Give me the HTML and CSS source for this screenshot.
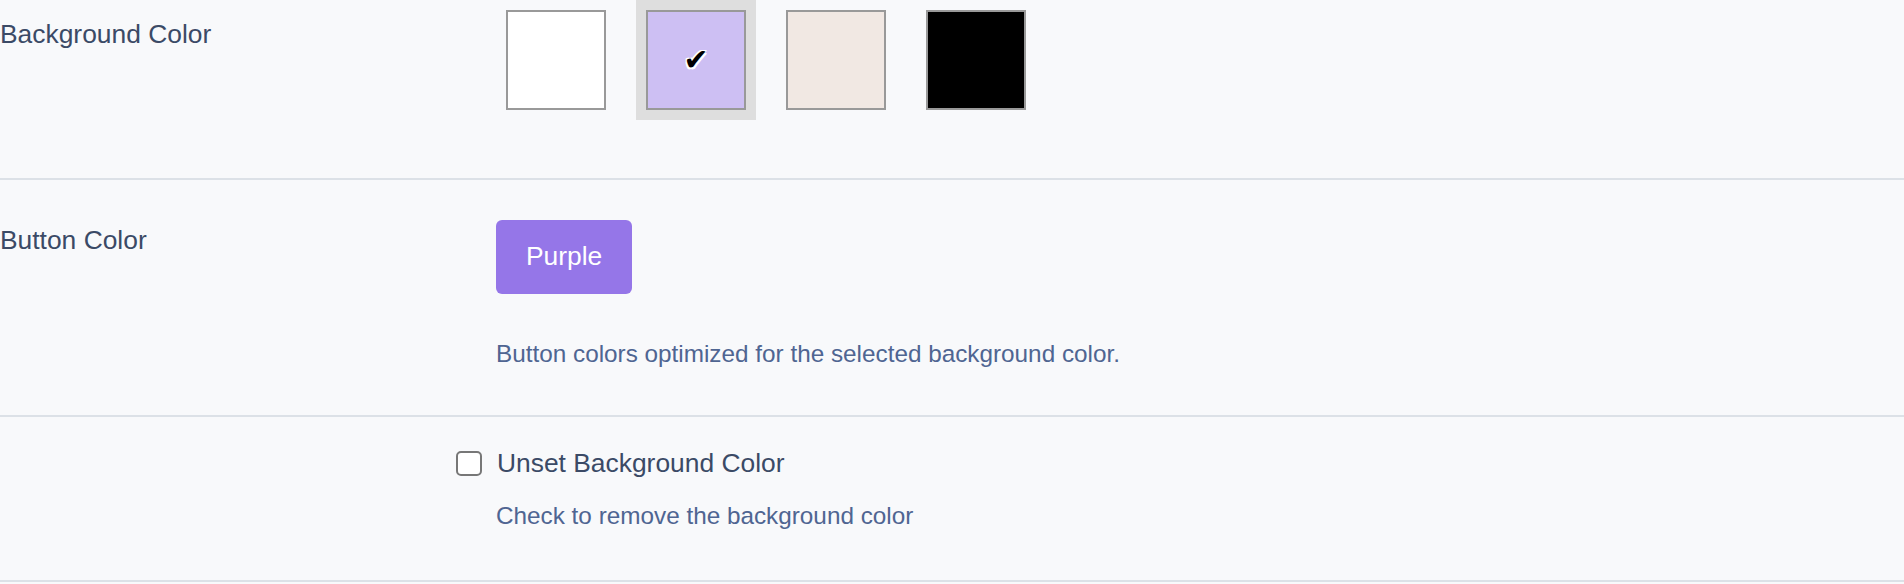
FILE: index.html
```html
<!DOCTYPE html>
<html lang="en">
<head>
  <meta charset="UTF-8">
  <meta name="viewport" content="width=device-width, initial-scale=1.0">
  <title>Color Settings</title>
  <link rel="stylesheet" href="styles.css">
</head>
<body>
  <div class="settings">
    <div class="field field-swatches">
      <div class="field-label">Background Color</div>
      <div class="field-body">
        <div class="swatches">
          <div class="swatch-item"><span class="swatch swatch-white"></span></div>
          <div class="swatch-item is-selected"><span class="swatch swatch-lavender"><span class="tick">✔</span></span></div>
          <div class="swatch-item"><span class="swatch swatch-linen"></span></div>
          <div class="swatch-item"><span class="swatch swatch-black"></span></div>
        </div>
      </div>
    </div>

    <div class="field">
      <div class="field-label">Button Color</div>
      <div class="field-body">
        <button class="color-button">Purple</button>
        <p class="help">Button colors optimized for the selected background color.</p>
      </div>
    </div>

    <div class="field field-toggle">
      <div class="field-label"></div>
      <div class="field-body">
        <label class="check-row">
          <input type="checkbox" class="checkbox">
          <span>Unset Background Color</span>
        </label>
        <p class="help help-tight">Check to remove the background color</p>
      </div>
    </div>
  </div>
</body>
</html>
```

FILE: styles.css
```css
body {
  margin: 0;
  background-color: #f8f9fb;
  font-family: "Liberation Sans", Arial, sans-serif;
  font-size: 26.4px;
  line-height: 1.5;
  color: #3b4a66;
}

.field {
  display: grid;
  grid-template-columns: 496px 1fr;
  padding: 41px 0 43px;
  border-bottom: 2px solid #dce1e7;
}

.field-swatches {
  padding: 15px 0 58px;
}

.field-toggle {
  padding: 27px 0 46px;
}

.field-label {
  white-space: nowrap;
}

.swatches {
  display: flex;
  gap: 20px;
  margin-top: -15px;
}

.swatch-item {
  padding: 10px;
}

.swatch-item.is-selected {
  background-color: #dedede;
}

.swatch {
  display: flex;
  align-items: center;
  justify-content: center;
  width: 100px;
  height: 100px;
  box-sizing: border-box;
  border: 2px solid #999;
}

.swatch-white {
  background-color: #fff;
}

.swatch-lavender {
  background-color: #cdbff3;
}

.swatch-linen {
  background-color: #f1e8e3;
}

.swatch-black {
  background-color: #000;
}

.tick {
  font-family: "DejaVu Sans", sans-serif;
  font-size: 30px;
  line-height: 1;
  color: #000;
  text-shadow: 1.5px 1.5px 0 #fff, -1.5px -1.5px 0 #fff, 1.5px -1.5px 0 #fff, -1.5px 1.5px 0 #fff;
}

.color-button {
  display: block;
  margin-top: -1px;
  padding: 17px 30px;
  border: none;
  border-radius: 6px;
  background-color: #9576e8;
  color: #fff;
  font-family: inherit;
  font-size: 26.4px;
  line-height: 1.5;
  cursor: pointer;
}

.help {
  margin: 42px 0 0;
  font-size: 24.3px;
  line-height: 1.5;
  color: #4f6592;
}

.help-tight {
  margin-top: 14px;
}

.check-row {
  display: flex;
  align-items: center;
  gap: 15px;
  margin-left: -40px;
}

.checkbox {
  appearance: none;
  width: 26px;
  height: 25px;
  margin: 0;
  box-sizing: border-box;
  border: 2px solid #777;
  border-radius: 5px;
  background-color: #fff;
}
```
